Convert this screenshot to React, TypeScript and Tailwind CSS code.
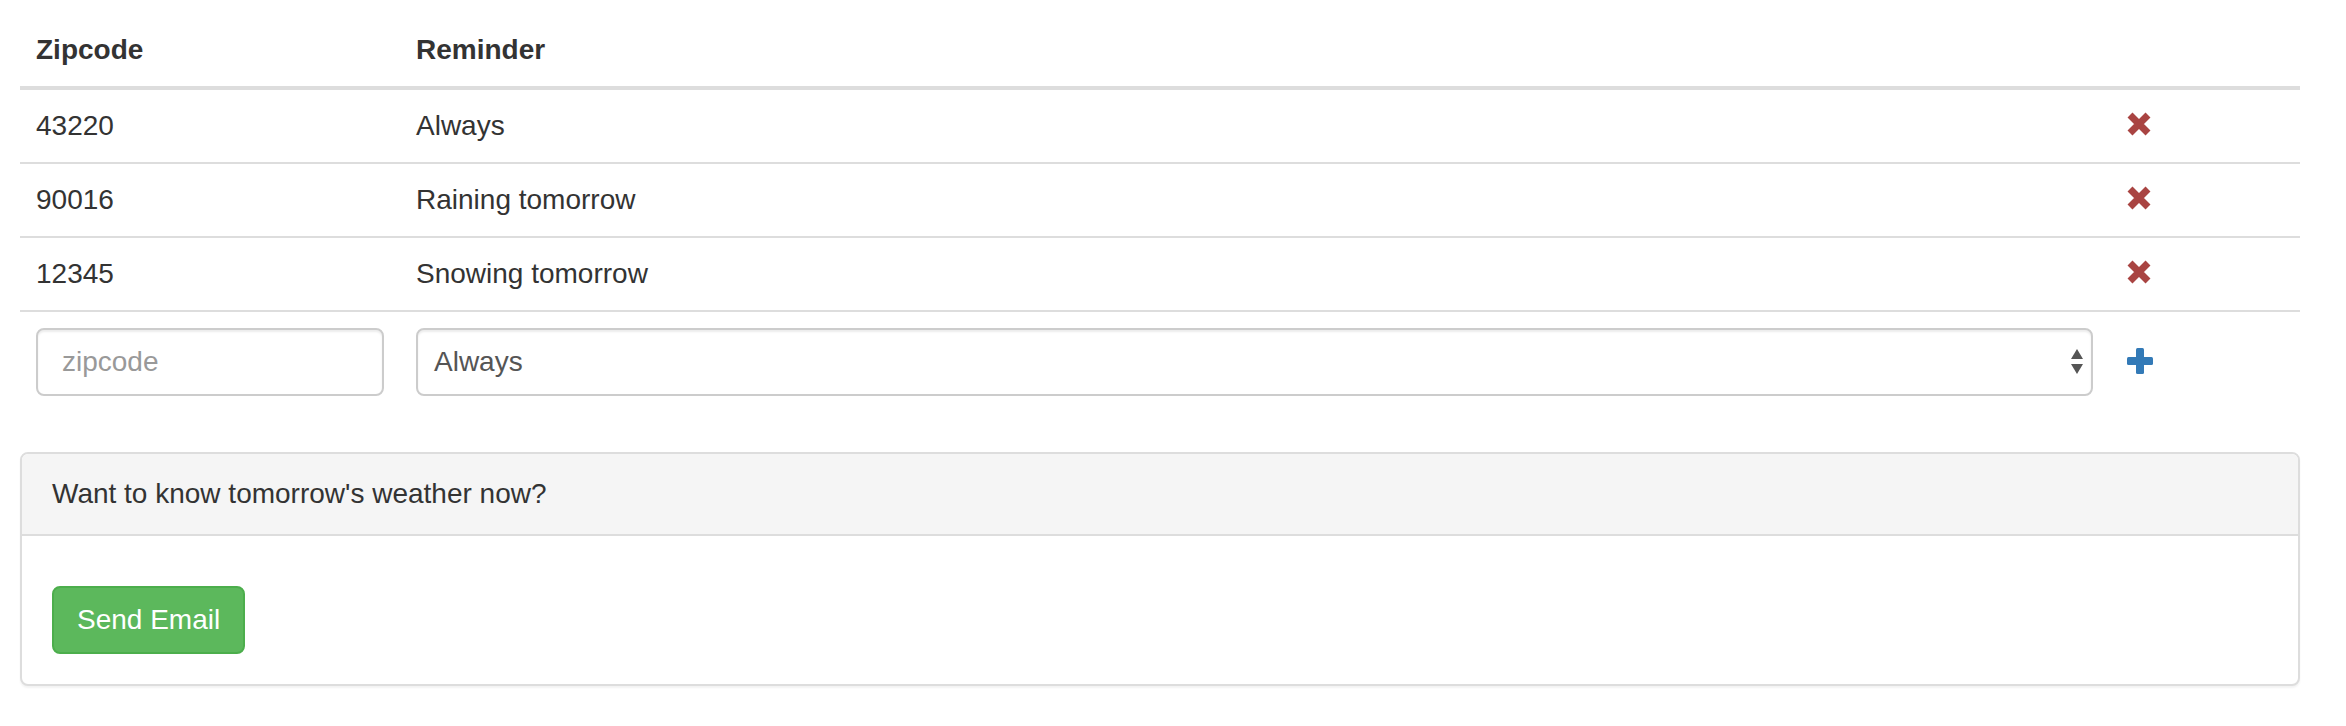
const rows = [
  { zip: "43220", reminder: "Always" },
  { zip: "90016", reminder: "Raining tomorrow" },
  { zip: "12345", reminder: "Snowing tomorrow" },
];

function RemoveIcon() {
  return (
    <svg width="24" height="24" viewBox="0 0 24 24" className="-mt-[4px]">
      <path d="M3 3 L21 21 M21 3 L3 21" stroke="#a94442" strokeWidth="7" strokeLinecap="butt" />
    </svg>
  );
}

function PlusIcon() {
  return (
    <svg width="26" height="26" viewBox="0 0 26 26" className="-mt-[3px]">
      <rect x="9" y="0" width="8" height="26" rx="1.5" fill="#337ab7" />
      <rect x="0" y="9" width="26" height="8" rx="1.5" fill="#337ab7" />
    </svg>
  );
}

function SelectArrows() {
  return (
    <svg width="12" height="26" viewBox="0 0 12 26">
      <path d="M6 0 L12 10 L0 10 Z" fill="#555" />
      <path d="M0 15 L12 15 L6 25 Z" fill="#555" />
    </svg>
  );
}

export default function App() {
  return (
    <div className="min-h-screen bg-white pt-[14px] pl-[20px] font-['Liberation_Sans',Arial,sans-serif] text-[28px] leading-[40px] text-[#333]">
      <div className="w-[2280px]">
        {/* table head */}
        <div className="grid grid-cols-[380px_1709px_191px] border-b-4 border-[#ddd] font-bold">
          <div className="p-[16px]">Zipcode</div>
          <div className="p-[16px]">Reminder</div>
          <div className="p-[16px]" />
        </div>

        {rows.map((r) => (
          <div key={r.zip} className="grid grid-cols-[380px_1709px_191px] border-b-2 border-[#ddd]">
            <div className="p-[16px]">{r.zip}</div>
            <div className="p-[16px]">{r.reminder}</div>
            <div className="flex h-[72px] items-center px-[18px]">
              <RemoveIcon />
            </div>
          </div>
        ))}

        {/* new reminder row */}
        <div className="grid grid-cols-[380px_1709px_191px]">
          <div className="p-[16px]">
            <input
              placeholder="zipcode"
              className="h-[68px] w-[348px] rounded-[8px] border-2 border-[#ccc] px-[24px] text-[28px] text-[#555] shadow-[inset_0_2px_2px_rgba(0,0,0,0.075)] outline-none placeholder:text-[#999]"
            />
          </div>
          <div className="p-[16px]">
            <div className="flex h-[68px] items-center justify-between rounded-[8px] border-2 border-[#ccc] pl-[16px] pr-[8px] text-[#555] shadow-[inset_0_2px_2px_rgba(0,0,0,0.075)]">
              <span>Always</span>
              <SelectArrows />
            </div>
          </div>
          <div className="flex h-[100px] items-center px-[18px]">
            <PlusIcon />
          </div>
        </div>

        {/* panel */}
        <div className="mt-[40px] rounded-[8px] border-2 border-[#ddd] bg-white shadow-[0_2px_2px_rgba(0,0,0,0.05)]">
          <div className="rounded-t-[6px] border-b-2 border-[#ddd] bg-[#f5f5f5] px-[30px] py-[20px]">
            Want to know tomorrow's weather now?
          </div>
          <div className="p-[30px]">
            <button className="mt-[20px] rounded-[8px] border-2 border-[#4cae4c] bg-[#5cb85c] px-[23px] py-[12px] text-[28px] leading-[40px] text-white">
              Send Email
            </button>
          </div>
        </div>
      </div>
    </div>
  );
}
